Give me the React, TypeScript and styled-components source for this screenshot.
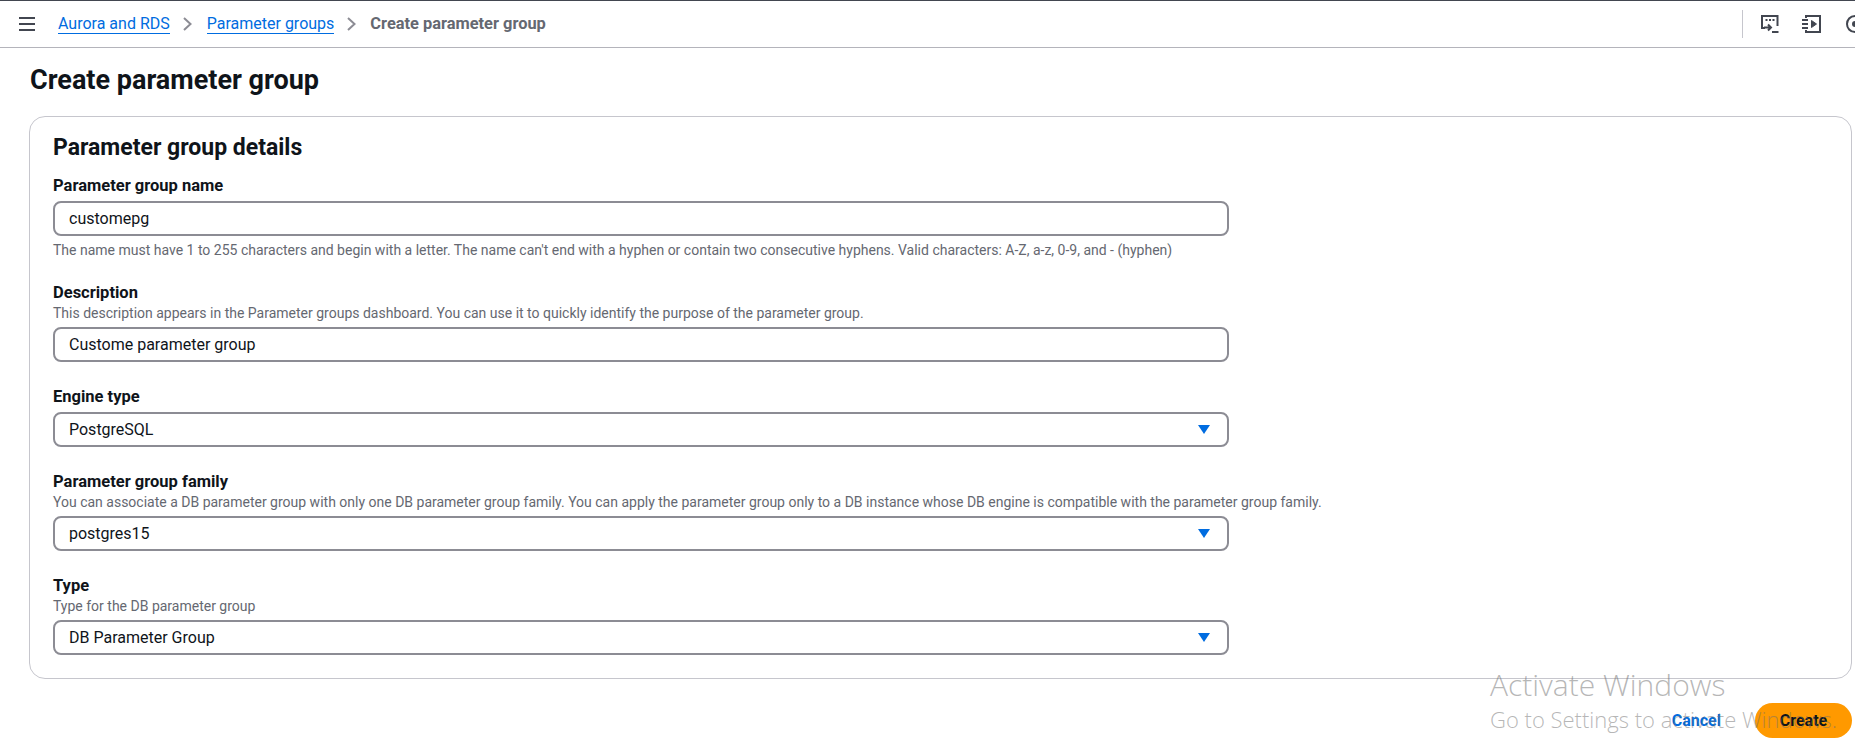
import React from "react";
import styled, { createGlobalStyle } from "styled-components";

const GlobalStyle = createGlobalStyle`
  html, body {
    margin: 0;
    padding: 0;
    background: #ffffff;
    overflow: hidden;
  }
  body {
    font-family: Roboto, "Noto Sans", sans-serif;
    color: #0f141a;
  }
`;

const fields = [
  {
    label: "Parameter group name",
    value: "customepg",
    after: "The name must have 1 to 255 characters and begin with a letter. The name can't end with a hyphen or contain two consecutive hyphens. Valid characters: A-Z, a-z, 0-9, and - (hyphen)",
  },
  {
    label: "Description",
    before: "This description appears in the Parameter groups dashboard. You can use it to quickly identify the purpose of the parameter group.",
    value: "Custome parameter group",
  },
  { label: "Engine type", value: "PostgreSQL", select: true },
  {
    label: "Parameter group family",
    before: "You can associate a DB parameter group with only one DB parameter group family. You can apply the parameter group only to a DB instance whose DB engine is compatible with the parameter group family.",
    value: "postgres15",
    select: true,
  },
  {
    label: "Type",
    before: "Type for the DB parameter group",
    value: "DB Parameter Group",
    select: true,
  },
];

const Separator = () => (
  <Chevron width="9" height="14" viewBox="0 0 9 14" fill="none" stroke="#8c8c94" strokeWidth="2">
    <path d="M1 1l6.5 6L1 13" />
  </Chevron>
);

const App = () => {
  return (
    <Page>
      <GlobalStyle />
      <TopBar>
        <Menu aria-label="menu">
          <svg width="16" height="16" viewBox="0 0 16 16" fill="none" stroke="#424650" strokeWidth="2">
            <path d="M0 2h16M0 8h16M0 14h16" />
          </svg>
        </Menu>
        <Crumbs>
          <Crumb>Aurora and RDS</Crumb>
          <Separator />
          <Crumb>Parameter groups</Crumb>
          <Separator />
          <Current>Create parameter group</Current>
        </Crumbs>
        <Tools>
          <ToolDivider />
          <svg width="20" height="20" viewBox="0 0 20 20" fill="none" stroke="#424650" strokeWidth="2">
            <path d="M5 14H2V2h15.5v10" />
            <path d="M5.5 6h2M9 6h2M12.5 6h2" />
            <path d="M4 13.5h7M8 10.5l3 3-3 3" />
            <path d="M12 18h6.5" />
          </svg>
          <svg width="20" height="20" viewBox="0 0 20 20" fill="none" stroke="#424650" strokeWidth="2">
            <path d="M4 4V2h14v16H4v-2" />
            <path d="M0 6h6M0 10h6M0 14h6" />
            <path d="M9.5 6.5v7l5-3.5z" fill="#424650" strokeWidth="1" />
          </svg>
          <svg width="20" height="20" viewBox="0 0 20 20" fill="none" stroke="#424650" strokeWidth="2">
            <path d="M20 2h-9C6 2 3 6 3 10s3 8 8 8h9" />
            <circle cx="11" cy="10" r="2" fill="#424650" />
          </svg>
        </Tools>
      </TopBar>

      <Main>
        <Title>Create parameter group</Title>
        <Card>
          <CardTitle>Parameter group details</CardTitle>
          {fields.map((f) => (
            <Field key={f.label}>
              <Label>{f.label}</Label>
              {f.before && <HelpAbove>{f.before}</HelpAbove>}
              <Control>
                {f.value}
                {f.select && <Caret />}
              </Control>
              {f.after && <HelpBelow>{f.after}</HelpBelow>}
            </Field>
          ))}
        </Card>
        <Actions>
          <CancelLink>Cancel</CancelLink>
          <CreateButton>Create</CreateButton>
        </Actions>
      </Main>

      <Watermark>
        <WatermarkTitle>Activate Windows</WatermarkTitle>
        <WatermarkText>Go to Settings to activate Windows.</WatermarkText>
      </Watermark>
    </Page>
  );
};

export default App;

const Page = styled.div`
  position: relative;
  width: 1855px;
  height: 742px;
  overflow: hidden;
  background: #ffffff;
`;
const TopBar = styled.header`
  box-sizing: border-box;
  height: 48px;
  border-top: 1px solid #424650;
  border-bottom: 1px solid #b4b4bb;
  display: flex;
  align-items: center;
  padding-left: 19px;
`;
const Menu = styled.div`
  width: 16px;
  height: 16px;
  display: flex;
  margin-right: 23px;
`;
const Crumbs = styled.nav`
  display: flex;
  align-items: center;
  font-size: 16px;
`;
const Crumb = styled.a`
  color: #006ce0;
  border-bottom: 1px solid #006ce0;
  line-height: 18px;
`;
const Current = styled.span`
  color: #656871;
  font-size: 16.4px;
  font-weight: 700;
  line-height: 18px;
  margin-left: -1px;
`;
const Chevron = styled.svg`
  margin: 0 15px 0 13px;
`;
const Tools = styled.div`
  margin-left: auto;
  margin-right: -9px;
  display: flex;
  align-items: center;
  gap: 22px;
`;
const ToolDivider = styled.div`
  width: 1px;
  height: 28px;
  background: #c6c6cd;
  margin-right: -5px;
`;
const Main = styled.main`
  padding: 0 3px 0 29px;
`;
const Title = styled.h1`
  margin: 17px 0 21px 1px;
  font-size: 27px;
  line-height: 30px;
  font-weight: 700;
`;
const Card = styled.section`
  box-sizing: border-box;
  border: 1px solid #c6c6cd;
  border-radius: 16px;
  padding: 19px 24px 23px 23px;
`;
const CardTitle = styled.h2`
  margin: 0 0 17px;
  font-size: 23px;
  line-height: 24px;
  font-weight: 700;
`;
const Field = styled.div`
  width: 1176px;
  & + & {
    margin-top: 26px;
  }
`;
const Label = styled.div`
  font-size: 16.5px;
  line-height: 18px;
  font-weight: 700;
  margin-bottom: 6px;
`;
const HelpAbove = styled.div`
  font-size: 14px;
  line-height: 16px;
  color: #656871;
  margin: -3px 0 6px;
  white-space: nowrap;
`;
const HelpBelow = styled(HelpAbove)`
  margin: 6px 0 0;
`;
const Control = styled.div`
  box-sizing: border-box;
  height: 35px;
  border: 2px solid #8c8c94;
  border-radius: 8px;
  padding: 0 14px;
  display: flex;
  align-items: center;
  justify-content: space-between;
  font-size: 16px;
  color: #0f141a;
`;
const Caret = styled.span`
  width: 0;
  height: 0;
  margin-right: 3px;
  border-left: 6px solid transparent;
  border-right: 6px solid transparent;
  border-top: 9px solid #006ce0;
`;
const Actions = styled.div`
  display: flex;
  justify-content: flex-end;
  align-items: center;
  gap: 34px;
  margin-top: 24px;
`;
const CancelLink = styled.a`
  font-size: 16px;
  font-weight: 700;
  color: #006ce0;
`;
const CreateButton = styled.button`
  width: 97px;
  height: 35px;
  border: none;
  border-radius: 18px;
  background: #ff9900;
  color: #0f141a;
  font-family: inherit;
  font-size: 16px;
  font-weight: 700;
`;
const Watermark = styled.div`
  position: absolute;
  left: 1490px;
  top: 665px;
  font-family: "Open Sans", sans-serif;
  font-weight: 300;
  color: rgba(110, 110, 110, 0.5);
  pointer-events: none;
  white-space: nowrap;
`;
const WatermarkTitle = styled.div`
  font-size: 30px;
  line-height: 40px;
`;
const WatermarkText = styled.div`
  font-size: 22px;
  line-height: 29px;
`;
